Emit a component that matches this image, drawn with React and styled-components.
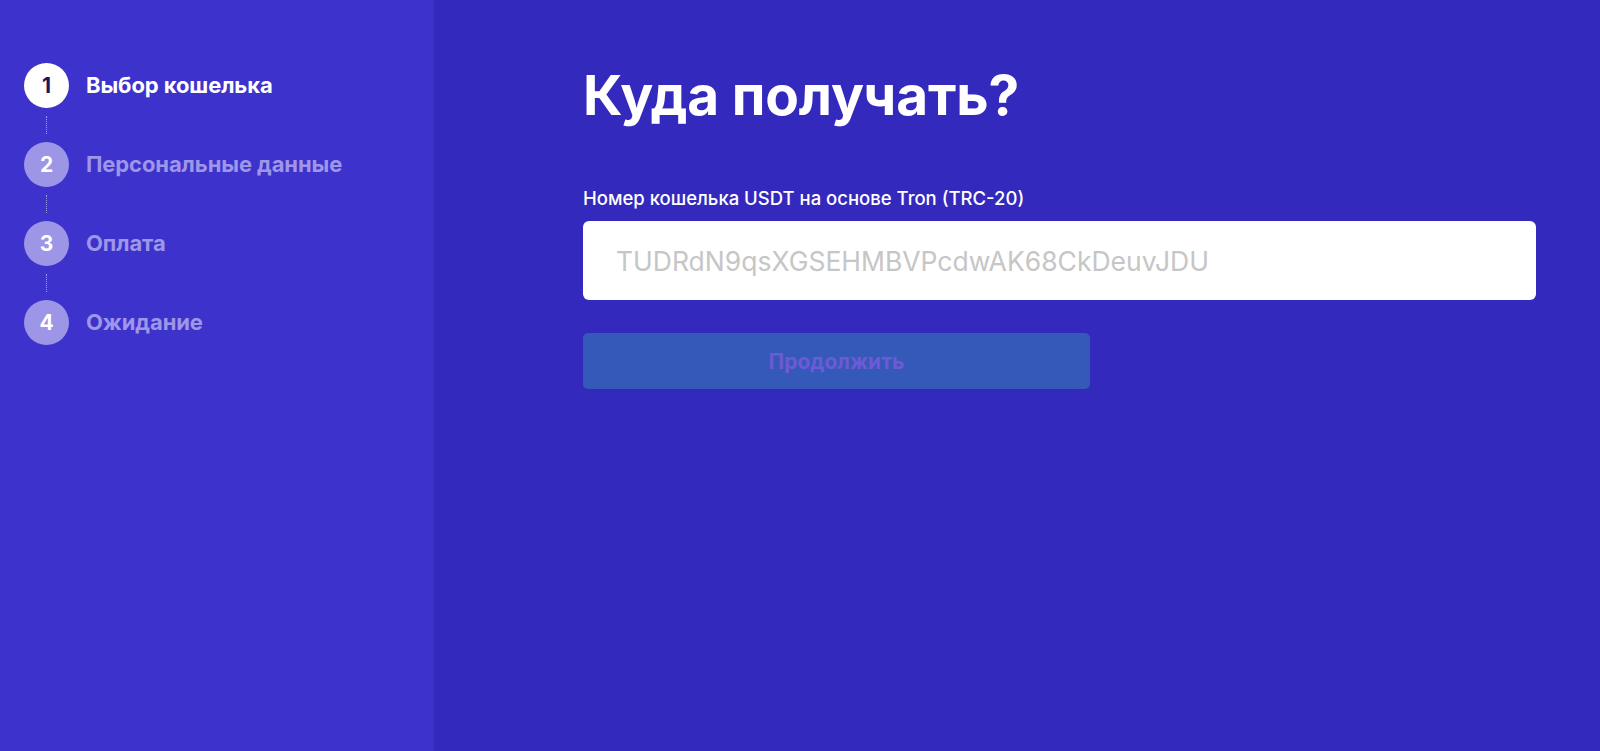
import styled, { createGlobalStyle } from "styled-components";

const GlobalStyle = createGlobalStyle`
  html, body {
    margin: 0;
    padding: 0;
    height: 100%;
  }
  body {
    font-family: Inter, "Noto Sans", sans-serif;
    background: #3429bd;
  }
  #root {
    height: 100%;
  }
`;

const steps = [
  { num: 1, title: "Выбор кошелька", active: true },
  { num: 2, title: "Персональные данные" },
  { num: 3, title: "Оплата" },
  { num: 4, title: "Ожидание" },
];

export default function App() {
  return (
    <>
      <GlobalStyle />
      <Layout>
        <Sidebar>
          <StepList>
            {steps.map((s, i) => (
              <li key={s.num}>
                <Step>
                  <StepCircle $active={s.active}>{s.num}</StepCircle>
                  <StepTitle $active={s.active}>{s.title}</StepTitle>
                </Step>
                {i < steps.length - 1 && <Connector />}
              </li>
            ))}
          </StepList>
        </Sidebar>
        <Main>
          <Heading>Куда получать?</Heading>
          <Label htmlFor="wallet">Номер кошелька USDT на основе Tron (TRC-20)</Label>
          <Input id="wallet" placeholder="TUDRdN9qsXGSEHMBVPcdwAK68CkDeuvJDU" />
          <Button disabled>Продолжить</Button>
        </Main>
      </Layout>
    </>
  );
}

const Layout = styled.div`
  display: flex;
  min-height: 100vh;
`;

const Sidebar = styled.aside`
  width: 434px;
  flex-shrink: 0;
  background: #3d33cc;
  border-right: 1px solid #3a2fc4;
  padding: 63px 0 0 24px;
  box-sizing: border-box;
`;

const StepList = styled.ol`
  list-style: none;
  margin: 0;
  padding: 0;
`;

const Step = styled.div`
  display: flex;
  align-items: center;
  gap: 17px;
`;

const StepCircle = styled.div`
  width: 45px;
  height: 45px;
  border-radius: 50%;
  flex-shrink: 0;
  display: flex;
  align-items: center;
  justify-content: center;
  font-size: 21px;
  font-weight: 700;
  color: ${(p) => (p.$active ? "#1c1560" : "#ffffff")};
  background: ${(p) => (p.$active ? "#ffffff" : "#9d95e6")};
`;

const StepTitle = styled.span`
  font-size: 22px;
  font-weight: 700;
  letter-spacing: -0.1px;
  color: ${(p) => (p.$active ? "#ffffff" : "#9e96e8")};
  margin-top: -2px;
`;

const Connector = styled.div`
  width: 0;
  height: 18px;
  margin: 8px 0 8px 22px;
  border-left: 1px dotted #a59df0;
`;

const Main = styled.main`
  flex: 1;
  padding: 62px 64px 0 149px;
`;

const Heading = styled.h1`
  margin: 0 0 59px;
  font-size: 55px;
  font-weight: 700;
  line-height: 1.2;
  letter-spacing: -0.2px;
  color: #ffffff;
`;

const Label = styled.label`
  display: block;
  font-size: 18.5px;
  font-weight: 500;
  color: #ffffff;
  margin-bottom: 12px;
`;

const Input = styled.input`
  display: block;
  width: 100%;
  height: 79px;
  box-sizing: border-box;
  border: none;
  border-radius: 6px;
  padding: 0 33px;
  font-family: Inter, "Noto Sans", sans-serif;
  font-size: 26.5px;
  color: #222;
  background: #ffffff;
  outline: none;
  &::placeholder {
    color: #c6c6c6;
  }
`;

const Button = styled.button`
  display: block;
  margin-top: 33px;
  width: 507px;
  height: 56px;
  border: none;
  border-radius: 5px;
  background: #3559b8;
  color: #6c5ad6;
  font-family: Inter, "Noto Sans", sans-serif;
  font-size: 21px;
  font-weight: 700;
  cursor: not-allowed;
`;
